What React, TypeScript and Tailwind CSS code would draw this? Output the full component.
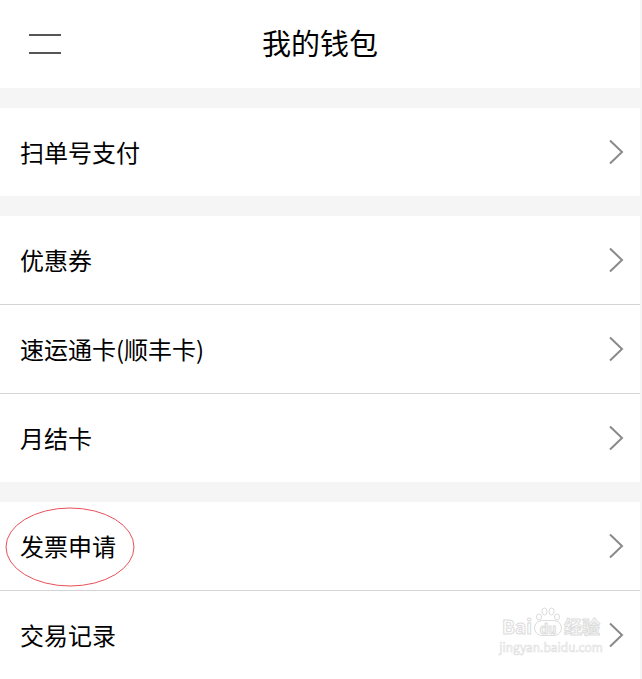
import React from "react";

const Chevron = () => (
  <svg width="16" height="26" viewBox="0 0 16 26" className="shrink-0">
    <path d="M2 1.5 L14 13 L2 24.5" fill="none" stroke="#8a8a8a" strokeWidth="2" />
  </svg>
);

const Row = ({ label, border }: { label: string; border?: boolean }) => (
  <div
    className={`flex h-[88px] items-center justify-between bg-white pl-[20px] pr-[16px] ${
      border ? "border-b border-[#d4d4d4] h-[89px]" : ""
    }`}
  >
    <span className="text-[24px] leading-none text-black">{label}</span>
    <Chevron />
  </div>
);

export default function App() {
  return (
    <div
      className="relative h-[679px] w-[642px] overflow-hidden bg-[#f5f5f5]"
      style={{ fontFamily: '"Noto Sans CJK SC", "Noto Sans", sans-serif' }}
    >
      <div className="flex w-[640px] flex-col">
        <div className="relative flex h-[88px] items-center justify-center bg-white pb-[4px]">
          <div className="absolute left-[29px] top-[34px] flex flex-col gap-[16px]">
            <div className="h-[2px] w-[32px] bg-[#555]" />
            <div className="h-[2px] w-[32px] bg-[#555]" />
          </div>
          <span className="text-[29px] leading-none text-black">我的钱包</span>
        </div>
        <div className="h-[20px]" />
        <Row label="扫单号支付" />
        <div className="h-[20px]" />
        <Row label="优惠券" border />
        <Row label="速运通卡(顺丰卡)" border />
        <Row label="月结卡" />
        <div className="h-[20px]" />
        <Row label="发票申请" border />
        <Row label="交易记录" />
      </div>

      <svg className="pointer-events-none absolute left-0 top-0" width="642" height="679">
        <ellipse cx="70" cy="547" rx="64" ry="39" fill="none" stroke="#e8505a" strokeWidth="1" />
      </svg>

      <div className="pointer-events-none absolute left-[492px] top-[606px] flex w-[118px] flex-col items-center">
        <div className="flex items-end text-[19px] font-bold leading-none text-white [-webkit-text-stroke:1px_#dcdcdc]">
          <span className="pb-[1px]">Bai</span>
          <span className="relative mx-[1px] flex h-[30px] w-[30px] flex-col items-center justify-end">
            <svg width="26" height="14" viewBox="0 0 26 14" className="mb-[-1px]">
              <g fill="none" stroke="#dcdcdc" strokeWidth="1">
                <ellipse cx="4" cy="10" rx="2.5" ry="3" />
                <ellipse cx="9.5" cy="4.5" rx="2.5" ry="3.5" />
                <ellipse cx="16.5" cy="4.5" rx="2.5" ry="3.5" />
                <ellipse cx="22" cy="10" rx="2.5" ry="3" />
              </g>
            </svg>
            <span className="flex h-[16px] w-[28px] items-center justify-center rounded-[8px] border border-[#dcdcdc] text-[13px]">
              du
            </span>
          </span>
          <span className="pb-[1px] text-[18px]">经验</span>
        </div>
        <span className="mt-[5px] text-[12px] leading-none text-white [-webkit-text-stroke:0.6px_#dedede]">
          jingyan.baidu.com
        </span>
      </div>
    </div>
  );
}
